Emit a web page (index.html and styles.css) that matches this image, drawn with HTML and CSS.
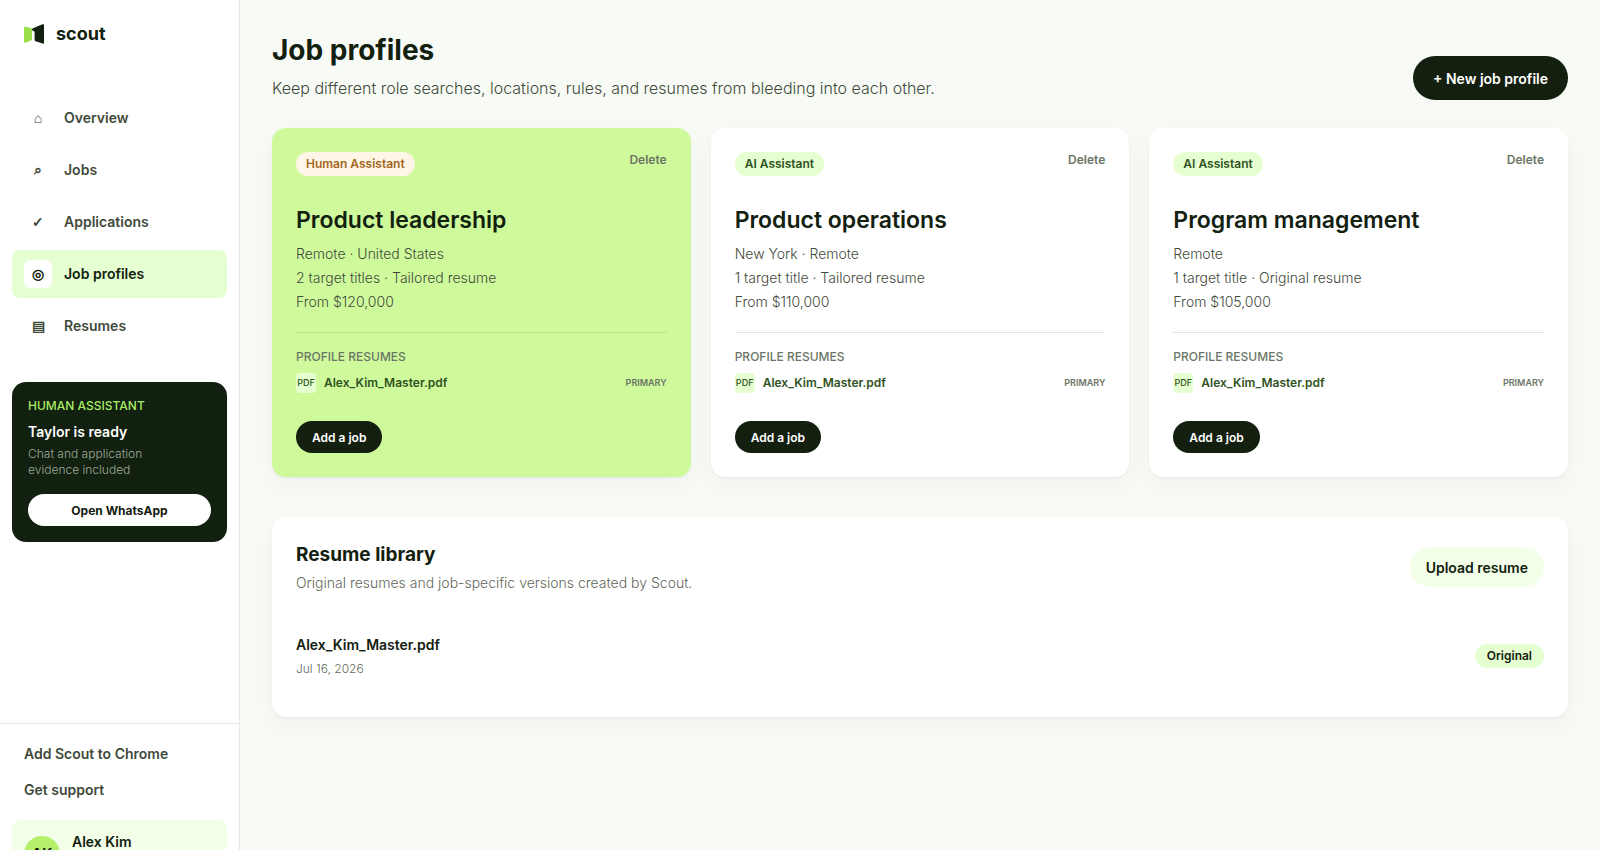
FILE: index.html
```html
<!DOCTYPE html>
<html lang="en">
	<head>
		<meta charset="utf-8">
		<title>Job profiles</title>
		<link rel="stylesheet" href="styles.css">
	</head>
	<body>
		<div class="layout">
			<aside class="sidebar">
				<a class="brand" href="#">
					<svg width="20" height="20" viewBox="0 0 20 20">
						<path fill="#9be04a" d="M0 4Q0 2.6 1.400 2.700L7 4Q8 4.300 8 5.200V15Q8 16 7 16.400L1.400 18.700Q0 19 0 17.800Z"/>
						<path fill="#12200f" d="M8 5.400Q8 4.600 9 4.200L18.500 0.300Q20 -0.200 20 1.200V18.500Q20 20 18.600 19.600L11.600 17.300Q10.600 17 10.600 16V8Q10.600 7.200 9.800 6.900L8.600 6.500Q8 6.200 8 5.400Z"/>
					</svg>
					<span>scout</span>
				</a>
				<nav class="nav">
					<a class="nav-item" href="#"><span class="nav-icon">⌂</span>Overview</a>
					<a class="nav-item" href="#"><span class="nav-icon">⌕</span>Jobs</a>
					<a class="nav-item" href="#"><span class="nav-icon">✓</span>Applications</a>
					<a class="nav-item active" href="#"><span class="nav-icon">◎</span>Job profiles</a>
					<a class="nav-item" href="#"><span class="nav-icon">▤</span>Resumes</a>
				</nav>
				<section class="assistant">
					<p class="assistant-label">HUMAN ASSISTANT</p>
					<h2>Taylor is ready</h2>
					<p class="assistant-text">Chat and application<br>evidence included</p>
					<button type="button">Open WhatsApp</button>
				</section>
				<div class="side-footer">
					<a class="side-link" href="#">Add Scout to Chrome</a>
					<a class="side-link" href="#">Get support</a>
					<div class="user">
						<span class="avatar">AK</span>
						<span class="user-name">Alex Kim</span>
					</div>
				</div>
			</aside>

			<main class="main">
				<header class="page-head">
					<div>
						<h1>Job profiles</h1>
						<p>Keep different role searches, locations, rules, and resumes from bleeding into each other.</p>
					</div>
					<button type="button" class="btn-new">+ New job profile</button>
				</header>

				<div class="cards">
					<article class="card selected">
						<div class="card-head">
							<span class="badge human">Human Assistant</span>
							<button type="button" class="btn-delete">Delete</button>
						</div>
						<h2>Product leadership</h2>
						<p>Remote · United States</p>
						<p>2 target titles · Tailored resume</p>
						<p>From $120,000</p>
						<div class="resumes">
							<h3>PROFILE RESUMES</h3>
							<div class="file">
								<span class="pdf">PDF</span>
								<a href="#">Alex_Kim_Master.pdf</a>
								<span class="primary">PRIMARY</span>
							</div>
						</div>
						<button type="button" class="btn-add">Add a job</button>
					</article>
					<article class="card">
						<div class="card-head">
							<span class="badge">AI Assistant</span>
							<button type="button" class="btn-delete">Delete</button>
						</div>
						<h2>Product operations</h2>
						<p>New York · Remote</p>
						<p>1 target title · Tailored resume</p>
						<p>From $110,000</p>
						<div class="resumes">
							<h3>PROFILE RESUMES</h3>
							<div class="file">
								<span class="pdf">PDF</span>
								<a href="#">Alex_Kim_Master.pdf</a>
								<span class="primary">PRIMARY</span>
							</div>
						</div>
						<button type="button" class="btn-add">Add a job</button>
					</article>
					<article class="card">
						<div class="card-head">
							<span class="badge">AI Assistant</span>
							<button type="button" class="btn-delete">Delete</button>
						</div>
						<h2>Program management</h2>
						<p>Remote</p>
						<p>1 target title · Original resume</p>
						<p>From $105,000</p>
						<div class="resumes">
							<h3>PROFILE RESUMES</h3>
							<div class="file">
								<span class="pdf">PDF</span>
								<a href="#">Alex_Kim_Master.pdf</a>
								<span class="primary">PRIMARY</span>
							</div>
						</div>
						<button type="button" class="btn-add">Add a job</button>
					</article>
				</div>

				<section class="library">
					<div class="library-head">
						<div>
							<h2>Resume library</h2>
							<p>Original resumes and job-specific versions created by Scout.</p>
						</div>
						<button type="button" class="btn-upload">Upload resume</button>
					</div>
					<div class="library-item">
						<div>
							<h3>Alex_Kim_Master.pdf</h3>
							<p>Jul 16, 2026</p>
						</div>
						<span class="tag">Original</span>
					</div>
				</section>
			</main>
		</div>
	</body>
</html>
```

FILE: styles.css
```css
* {
	box-sizing: border-box;
}

body {
	margin: 0;
	background: #f8faf5;
	color: #12200f;
	font-family: Inter, "Liberation Sans", sans-serif;
	font-size: 14px;
	line-height: 20px;
}

h1, h2, h3, p {
	margin: 0;
}

a {
	color: inherit;
	text-decoration: none;
}

button {
	border: 0;
	font-family: inherit;
	cursor: pointer;
}

.layout {
	display: flex;
	align-items: flex-start;
	height: 100vh;
	overflow: hidden;
}

/* sidebar */
.sidebar {
	display: flex;
	flex-direction: column;
	flex: none;
	width: 240px;
	min-height: 900px;
	padding: 20px 12px 12px 12px;
	background: #fff;
	border-right: 1px solid #e6e9e3;
}

.brand {
	display: flex;
	align-items: center;
	gap: 12px;
	height: 28px;
	padding: 0 12px;
	font-size: 18px;
	font-weight: 700;
}

.nav {
	display: flex;
	flex-direction: column;
	gap: 4px;
	margin-top: 46px;
}

.nav-item {
	display: flex;
	align-items: center;
	gap: 12px;
	height: 48px;
	padding: 0 12px;
	border-radius: 8px;
	color: #3f4a3a;
	font-weight: 600;
}

.nav-icon {
	width: 28px;
	height: 28px;
	border-radius: 6px;
	font-family: "Liberation Sans", sans-serif;
	font-weight: 700;
	line-height: 28px;
	text-align: center;
}

.nav-item.active {
	background: #e6ffd1;
	color: #12200f;
}

.active .nav-icon {
	background: #fff;
}

.assistant {
	margin-top: 32px;
	padding: 16px;
	border-radius: 14px;
	background: #11200f;
	color: #fff;
}

.assistant-label {
	color: #a9ec64;
	font-size: 12px;
	font-weight: 500;
	line-height: 16px;
}

.assistant h2 {
	margin-top: 8px;
	font-size: 14px;
	font-weight: 600;
}

.assistant-text {
	margin-top: 4px;
	color: #a0a89c;
	font-size: 12px;
	font-weight: 300;
	line-height: 16px;
}

.assistant button {
	width: 100%;
	height: 32px;
	margin-top: 16px;
	border-radius: 16px;
	background: #fff;
	color: #12200f;
	font-size: 12px;
	font-weight: 700;
}

.side-footer {
	margin: auto -12px 0 -12px;
	padding: 12px 12px 0 12px;
	border-top: 1px solid #e6e9e3;
}

.side-link {
	display: block;
	padding: 8px 12px;
	color: #3f4a3a;
	font-weight: 600;
}

.user {
	display: flex;
	gap: 12px;
	height: 68px;
	margin-top: 12px;
	padding: 12px;
	border-radius: 8px;
	background: #f3ffe9;
}

.avatar {
	width: 36px;
	height: 36px;
	margin-top: 4px;
	border-radius: 50%;
	background: #b4f06c;
	font-weight: 700;
	line-height: 36px;
	text-align: center;
}

.user-name {
	font-weight: 600;
}

/* main */
.main {
	flex: 1;
	min-width: 0;
	padding: 32px;
}

.page-head {
	display: flex;
	align-items: flex-end;
	justify-content: space-between;
}

.page-head h1 {
	font-size: 28px;
	font-weight: 700;
	line-height: 36px;
}

.page-head p {
	margin-top: 8px;
	color: #3f4a3a;
	font-size: 16px;
	font-weight: 300;
	line-height: 24px;
}

.btn-new {
	height: 44px;
	padding: 0 20px;
	border-radius: 22px;
	background: #14200f;
	color: #fff;
	font-size: 14px;
	font-weight: 600;
}

.cards {
	display: grid;
	grid-template-columns: repeat(3, 1fr);
	gap: 20px;
	margin-top: 28px;
}

.card,
.library {
	padding: 24px;
	border-radius: 14px;
	background: #fff;
	box-shadow: 0 1px 2px rgba(18, 32, 15, 0.05), 0 8px 24px rgba(18, 32, 15, 0.04);
}

.card.selected {
	background: #cffa9c;
}

.card-head {
	display: flex;
	align-items: flex-start;
	justify-content: space-between;
}

.badge,
.tag {
	padding: 0 10px;
	border-radius: 12px;
	background: #e6ffd1;
	color: #2f5222;
	font-size: 12px;
	font-weight: 600;
	line-height: 24px;
}

.badge.human {
	background: #fff6e8;
	color: #a3661f;
}

.btn-delete {
	padding: 0;
	background: none;
	color: #6b7566;
	font-size: 12px;
	font-weight: 600;
	line-height: 16px;
}

.card h2 {
	margin: 28px 0 6px 0;
	font-size: 23px;
	font-weight: 600;
	line-height: 32px;
}

.card p {
	color: #3f4a3a;
	font-weight: 300;
	line-height: 24px;
}

.resumes {
	margin-top: 18px;
	padding-top: 16px;
	border-top: 1px solid rgba(18, 32, 15, 0.12);
}

.resumes h3 {
	color: #6b7566;
	font-size: 12px;
	font-weight: 500;
	line-height: 16px;
}

.file {
	display: flex;
	align-items: center;
	gap: 8px;
	margin-top: 8px;
	color: #2f5222;
	font-size: 12px;
	font-weight: 600;
}

.pdf {
	width: 20px;
	border-radius: 4px;
	background: #e6ffd1;
	font-size: 9px;
	font-weight: 500;
	text-align: center;
}

.primary {
	margin-left: auto;
	color: #6b7566;
	font-size: 9px;
}

.btn-add {
	height: 32px;
	margin-top: 28px;
	padding: 0 16px;
	border-radius: 16px;
	background: #14200f;
	color: #fff;
	font-size: 12px;
	font-weight: 600;
}

/* resume library */
.library {
	margin-top: 40px;
}

.library-head,
.library-item {
	display: flex;
	align-items: center;
	justify-content: space-between;
}

.library-head h2 {
	font-size: 19px;
	font-weight: 700;
	line-height: 28px;
}

.library-head p {
	margin-top: 4px;
	color: #5f695a;
	font-weight: 300;
}

.btn-upload {
	height: 40px;
	padding: 0 16px;
	border-radius: 20px;
	background: #f3ffe9;
	color: #12200f;
	font-size: 14px;
	font-weight: 600;
}

.library-item {
	margin-top: 24px;
	padding: 18px 0 16px 0;
}

.library-item h3 {
	font-size: 14px;
	font-weight: 600;
}

.library-item p {
	margin-top: 6px;
	color: #5f695a;
	font-size: 12px;
	font-weight: 300;
	line-height: 16px;
}

.tag {
	padding: 0 12px;
	color: #12200f;
}
```
